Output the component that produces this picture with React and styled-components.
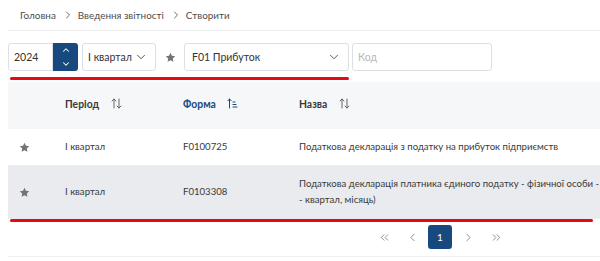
import styled, { createGlobalStyle } from 'styled-components';
import { ChevronRight, ChevronDown, ChevronUp, ChevronLeft, ChevronsLeft, ChevronsRight } from 'lucide-react';

const GlobalStyle = createGlobalStyle`
  html, body {
    margin: 0;
    padding: 0;
    background: #fff;
    overflow: hidden;
  }
  body {
    font-family: Lato, "Noto Sans", sans-serif;
    color: #333;
  }
`;

const BLUE = '#17497f';

const Page = styled.div`
  width: 864px;
  padding-left: 8px;
`;

const Breadcrumb = styled.nav`
  height: 31px;
  width: 592px;
  display: flex;
  align-items: center;
  gap: 3px;
  padding-left: 12px;
  box-sizing: border-box;
  border-bottom: 1px solid #ececec;
  font-size: 9.9px;
  color: #4d4d4d;
  svg {
    color: #444;
    margin: 0 1px 0 3px;
  }
`;

const Toolbar = styled.div`
  margin-top: 12px;
  height: 28px;
  display: flex;
  align-items: stretch;
`;

const Field = styled.div`
  box-sizing: border-box;
  width: ${(p) => p.$w}px;
  margin-left: ${(p) => p.$ml || 0}px;
  border: 1px solid #dcdfe3;
  border-radius: ${(p) => (p.$joined ? '3px 0 0 3px' : '3px')};
  display: flex;
  align-items: center;
  justify-content: space-between;
  padding: 0 7px 0 ${(p) => p.$pl || 5}px;
  font-size: 10.5px;
  white-space: nowrap;
  color: ${(p) => (p.$placeholder ? '#b5b8bd' : '#333')};
  background: #fff;
  svg {
    color: #444;
    flex: none;
  }
`;

const Stepper = styled.div`
  width: 25px;
  background: ${BLUE};
  border-radius: 0 3px 3px 0;
  display: flex;
  flex-direction: column;
  align-items: center;
  justify-content: center;
  gap: 4px;
  color: #fff;
`;

const StarSlot = styled.div`
  width: 28px;
  display: flex;
  align-items: center;
  justify-content: center;
`;

const Mark = styled.div`
  height: 3px;
  width: ${(p) => p.$w}px;
  margin-left: 2px;
  margin-top: ${(p) => p.$mt || 0}px;
  background: #e50914;
  border-radius: 2px;
`;

const Table = styled.div`
  margin-top: 2px;
`;

const Row = styled.div`
  display: grid;
  grid-template-columns: 49px 118px 116px 1fr;
  align-items: center;
  height: ${(p) => p.$h}px;
  background: ${(p) => p.$bg || '#fff'};
  font-size: 9.6px;
  color: #3a3a3a;
`;

const Cell = styled.div`
  padding-left: ${(p) => (p.$star ? 11 : 8)}px;
  display: flex;
  align-items: center;
  line-height: 16px;
  white-space: pre;
`;

const HeadCell = styled(Cell)`
  font-weight: 700;
  font-size: 10.4px;
  gap: 9px;
  color: ${(p) => (p.$active ? BLUE : '#3a3a3a')};
  padding-bottom: 4px;
`;

const Pager = styled.div`
  display: flex;
  justify-content: center;
  gap: 4px;
  padding: 3px 0 7px;
  border-bottom: 1px solid #f0f0f0;
`;

const PageBtn = styled.div`
  width: 24px;
  height: 24px;
  border-radius: 3px;
  display: flex;
  align-items: center;
  justify-content: center;
  font-size: 10px;
  background: ${(p) => (p.$active ? BLUE : 'transparent')};
  color: ${(p) => (p.$active ? '#fff' : '#6f757d')};
`;

const Star = ({ size = 11 }) => (
  <svg width={size} height={size} viewBox="0 0 24 24">
    <path
      fill="#747474"
      d="M12 1.8l3.1 6.6 7.2.9-5.3 5 1.4 7.1L12 17.9l-6.4 3.5 1.4-7.1-5.3-5 7.2-.9z"
    />
  </svg>
);

const SortIcon = () => (
  <svg width="11" height="11" viewBox="0 0 11 11" fill="none" stroke="#666" strokeWidth="1" strokeLinecap="round">
    <path d="M3 10V1M1 3l2-2 2 2" />
    <path d="M8 1v9M6 8l2 2 2-2" />
  </svg>
);

const SortAscIcon = () => (
  <svg width="11" height="11" viewBox="0 0 11 11" fill="none" stroke={BLUE} strokeWidth="1" strokeLinecap="round">
    <path d="M2.5 10V1M0.8 2.8l1.7-1.8 1.7 1.8" />
    <path d="M6 4h2M6 6.5h3M6 9h4" />
  </svg>
);

const rows = [
  { period: 'І квартал', form: 'F0100725', name: 'Податкова декларація з податку на прибуток підприємств', h: 36 },
  {
    period: 'І квартал',
    form: 'F0103308',
    name: 'Податкова декларація платника єдиного податку - фізичної особи -\n- квартал, місяць)',
    h: 54,
    bg: '#e9ebee',
  },
];

export default function App() {
  return (
    <Page>
      <GlobalStyle />
      <Breadcrumb>
        <span>Головна</span>
        <ChevronRight size={12} strokeWidth={1.6} />
        <span>Введення звітності</span>
        <ChevronRight size={12} strokeWidth={1.6} />
        <span>Створити</span>
      </Breadcrumb>

      <Toolbar>
        <Field $w={45} $joined>2024</Field>
        <Stepper>
          <ChevronUp size={10} strokeWidth={2.5} />
          <ChevronDown size={10} strokeWidth={2.5} />
        </Stepper>
        <Field $w={74} $ml={4}>
          <span>І квартал</span>
          <ChevronDown size={14} strokeWidth={1.5} />
        </Field>
        <StarSlot>
          <Star />
        </StarSlot>
        <Field $w={165} $pl={7}>
          <span>F01 Прибуток</span>
          <ChevronDown size={14} strokeWidth={1.5} />
        </Field>
        <Field $w={140} $ml={3} $placeholder>
          Код
        </Field>
      </Toolbar>
      <Mark $w={339} $mt={6} />

      <Table>
        <Row $h={47} $bg="#f6f7f9">
          <Cell $star />
          <HeadCell>
            Період <SortIcon />
          </HeadCell>
          <HeadCell $active>
            Форма <SortAscIcon />
          </HeadCell>
          <HeadCell>
            Назва <SortIcon />
          </HeadCell>
        </Row>
        {rows.map((r) => (
          <Row key={r.form} $h={r.h} $bg={r.bg}>
            <Cell $star>
              <Star />
            </Cell>
            <Cell>{r.period}</Cell>
            <Cell>{r.form}</Cell>
            <Cell>{r.name}</Cell>
          </Row>
        ))}
      </Table>
      <Mark $w={583} />

      <Pager>
        <PageBtn>
          <ChevronsLeft size={13} strokeWidth={1.5} />
        </PageBtn>
        <PageBtn>
          <ChevronLeft size={13} strokeWidth={1.5} />
        </PageBtn>
        <PageBtn $active>1</PageBtn>
        <PageBtn>
          <ChevronRight size={13} strokeWidth={1.5} />
        </PageBtn>
        <PageBtn>
          <ChevronsRight size={13} strokeWidth={1.5} />
        </PageBtn>
      </Pager>
    </Page>
  );
}
